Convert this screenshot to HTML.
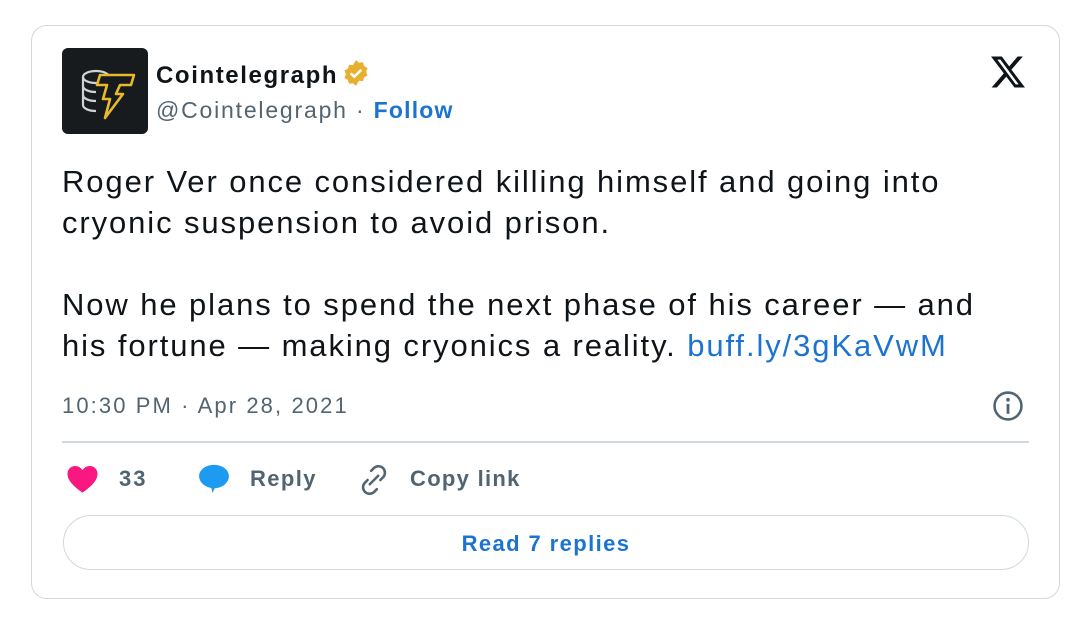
<!DOCTYPE html>
<html><head><style>
body{margin:0;width:1080px;height:621px;background:#fff;font-family:"Liberation Sans",Arial,sans-serif;position:relative;overflow:hidden}
.card{position:absolute;left:31px;top:25px;width:1027px;height:572px;border:1.5px solid #cfd9de;border-radius:16px}
.abs{position:absolute;white-space:nowrap}
</style></head><body>
<div class="card"></div>
<div class="abs" style="left:62px;top:48px;width:86px;height:86px;background:#171b1e;border-radius:6px">
<svg width="86" height="86" viewBox="0 0 86 86">
<g fill="none" stroke="#cfd3d6" stroke-width="2.2">
<ellipse cx="34" cy="29" rx="13" ry="6"/>
<path d="M21 29v28c0 3.5 6 6 13 6"/><path d="M21 38c0 3.5 6 6 13 6M21 47c0 3.5 6 6 13 6"/></g>
<path d="M38 27h34l-3 10h-11l-4 9h7l-18 24 5-19h-7l4-14h-10z" fill="#171b1e" stroke="#e8b92c" stroke-width="2.6" stroke-linejoin="round"/>
</svg></div>
<div class="abs" style="left:156px;top:59px;font-size:24px;font-weight:bold;color:#0f1419;letter-spacing:1.6px">Cointelegraph<svg style="vertical-align:-4px;margin-left:4px" width="28" height="28" viewBox="0 0 24 24"><path d="M12 1l2.6 2.2 3.4-.4.9 3.3 3 1.6-1.2 3.2 1.2 3.2-3 1.6-.9 3.3-3.4-.4L12 23l-2.6-2.2-3.4.4-.9-3.3-3-1.6L3.3 13 2.1 9.8l3-1.6.9-3.3 3.4.4z" fill="#e8b02e"/><path d="M7.5 12.2l3 3 6-6" fill="none" stroke="#fff" stroke-width="2.2"/></svg></div>
<div class="abs" style="left:156px;top:97px;font-size:23px;color:#536471;letter-spacing:1.8px">@Cointelegraph · <b style="color:#1d74d0;letter-spacing:1.2px">Follow</b></div>
<svg class="abs" style="left:989px;top:55px" width="38" height="34" viewBox="0 0 24 22"><path d="M18.2 1h3.4l-7.4 8.5L23 21h-6.8l-5.3-7-6.1 7H1.4l7.9-9.1L1 1h7l4.8 6.4zm-1.2 18h1.9L7.1 3H5.1z" fill="#0f1419"/></svg>
<div class="abs" style="left:62px;top:161px;font-size:31px;line-height:41px;color:#0f1419;letter-spacing:1.9px">Roger Ver once considered killing himself and going into<br>cryonic suspension to avoid prison.<br><br>Now he plans to spend the next phase of his career — and<br>his fortune — making cryonics a reality. <span style="color:#1d74d0">buff.ly/3gKaVwM</span></div>
<div class="abs" style="left:62px;top:393px;font-size:22px;color:#536471;letter-spacing:2.1px">10:30 PM · Apr 28, 2021</div>
<svg class="abs" style="left:991px;top:389px" width="34" height="34" viewBox="0 0 24 24"><circle cx="12" cy="12" r="9.5" fill="none" stroke="#536471" stroke-width="1.8"/><circle cx="12" cy="7.6" r="1.3" fill="#536471"/><path d="M12 10.5v7" stroke="#536471" stroke-width="2"/></svg>
<div class="abs" style="left:62px;top:441px;width:967px;height:1.5px;background:#cfd9de"></div>
<svg class="abs" style="left:66px;top:464px" width="33" height="30" viewBox="0 0 24 22"><path d="M12 21C5 16 1 12 1 7.2 1 3.8 3.6 1.5 6.6 1.5c2.3 0 4.2 1.3 5.4 3 1.2-1.7 3.1-3 5.4-3 3 0 5.6 2.3 5.6 5.7C23 12 19 16 12 21z" fill="#f91880"/></svg>
<div class="abs" style="left:119px;top:466px;font-size:22px;font-weight:bold;color:#536471;letter-spacing:2px">33</div>
<svg class="abs" style="left:197px;top:462px" width="34" height="34" viewBox="0 0 24 24"><path d="M12 2c6 0 10.5 3.5 10.5 8s-4.5 8.5-10 8.5l-1.6 3.4-.7-3.5C5 17.5 1.5 14 1.5 10 1.5 5.5 6 2 12 2z" fill="#1d9bf0"/></svg>
<div class="abs" style="left:250px;top:466px;font-size:22px;font-weight:bold;color:#536471;letter-spacing:1.4px">Reply</div>
<svg class="abs" style="left:357px;top:463px" width="34" height="34" viewBox="0 0 24 24"><g fill="none" stroke="#536471" stroke-width="1.8" stroke-linecap="round"><path d="M10 5.5l2-2a4.6 4.6 0 016.5 6.5l-2 2"/><path d="M14 18.5l-2 2A4.6 4.6 0 015.5 14l2-2"/><path d="M9 15l6-6"/></g></svg>
<div class="abs" style="left:410px;top:466px;font-size:22px;font-weight:bold;color:#536471;letter-spacing:1.3px">Copy link</div>
<div class="abs" style="left:63px;top:515px;width:964px;height:53px;border:1.5px solid #cfd9de;border-radius:28px;text-align:center;line-height:55px;font-size:22px;font-weight:bold;color:#1d74d0;letter-spacing:1.4px">Read 7 replies</div>
</body></html>
